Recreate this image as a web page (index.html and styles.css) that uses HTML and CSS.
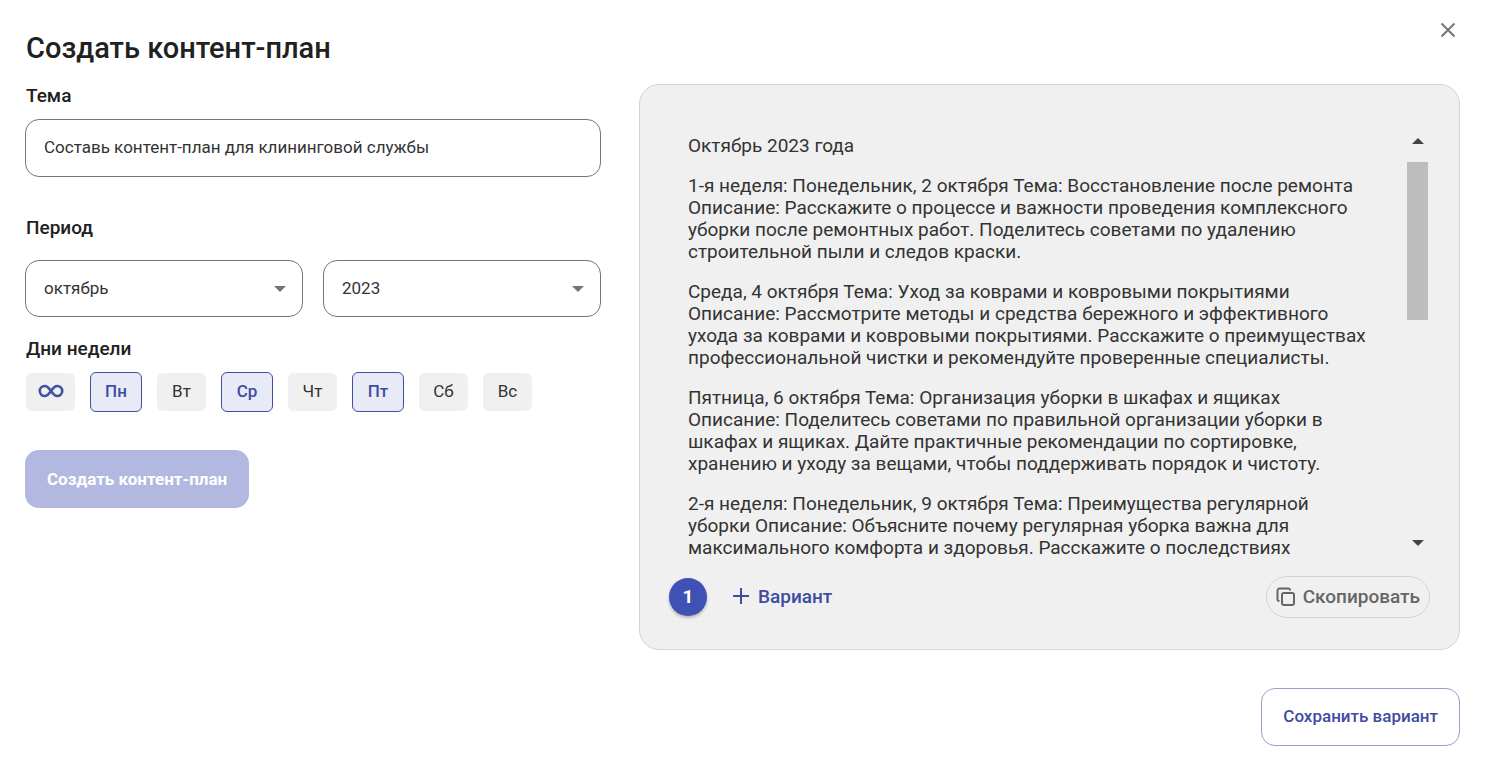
FILE: index.html
```html
<!DOCTYPE html>
<html lang="ru">
<head>
<meta charset="utf-8">
<meta name="viewport" content="width=device-width, initial-scale=1">
<title>Создать контент-план</title>
<link rel="stylesheet" href="styles.css">
</head>
<body>
<main class="dialog">
  <header class="dialog-header">
    <h1 class="title">Создать контент-план</h1>
    <button class="close" type="button" aria-label="Закрыть">
      <svg width="16" height="16" viewBox="0 0 16 16"><path d="M1.5 1.5l13 13M14.5 1.5l-13 13" fill="none" stroke="currentColor" stroke-width="2"/></svg>
    </button>
  </header>
  <div class="columns">
    <form class="form">
      <label class="label" for="topic">Тема</label>
      <input class="field" id="topic" type="text" value="Составь контент-план для клининговой службы">
      <label class="label label-period" for="month">Период</label>
      <div class="period">
        <div class="select-box">
          <select class="field" id="month"><option>октябрь</option></select>
          <svg class="caret" width="12" height="6" viewBox="0 0 12 6"><path d="M0 0h12L6 6z" fill="currentColor"/></svg>
        </div>
        <div class="select-box">
          <select class="field" aria-label="Год"><option>2023</option></select>
          <svg class="caret" width="12" height="6" viewBox="0 0 12 6"><path d="M0 0h12L6 6z" fill="currentColor"/></svg>
        </div>
      </div>
      <h2 class="label label-days">Дни недели</h2>
      <div class="days">
        <button class="day day-all" type="button" aria-label="Все дни">
          <svg width="26" height="14" viewBox="0 0 26 14"><path d="M13 7C11 4.200 9.500 2 6.800 2a5 5 0 0 0 0 10C9.500 12 11 9.800 13 7s3.500-5 6.200-5a5 5 0 0 1 0 10C16.500 12 15 9.800 13 7z" fill="none" stroke="currentColor" stroke-width="2.600"/></svg>
        </button>
        <button class="day day-on" type="button" aria-pressed="true">Пн</button>
        <button class="day" type="button">Вт</button>
        <button class="day day-on" type="button" aria-pressed="true">Ср</button>
        <button class="day" type="button">Чт</button>
        <button class="day day-on" type="button" aria-pressed="true">Пт</button>
        <button class="day" type="button">Сб</button>
        <button class="day" type="button">Вс</button>
      </div>
      <button class="submit" type="button" disabled>Создать контент-план</button>
    </form>
    <div class="result">
      <section class="panel">
        <div class="viewer">
          <div class="plan">
            <p>Октябрь 2023 года</p>
            <p>1-я неделя: Понедельник, 2 октября Тема: Восстановление после ремонта<br>Описание: Расскажите о процессе и важности проведения комплексного<br>уборки после ремонтных работ. Поделитесь советами по удалению<br>строительной пыли и следов краски.</p>
            <p>Среда, 4 октября Тема: Уход за коврами и ковровыми покрытиями<br>Описание: Рассмотрите методы и средства бережного и эффективного<br>ухода за коврами и ковровыми покрытиями. Расскажите о преимуществах<br>профессиональной чистки и рекомендуйте проверенные специалисты.</p>
            <p>Пятница, 6 октября Тема: Организация уборки в шкафах и ящиках<br>Описание: Поделитесь советами по правильной организации уборки в<br>шкафах и ящиках. Дайте практичные рекомендации по сортировке,<br>хранению и уходу за вещами, чтобы поддерживать порядок и чистоту.</p>
            <p>2-я неделя: Понедельник, 9 октября Тема: Преимущества регулярной<br>уборки Описание: Объясните почему регулярная уборка важна для<br>максимального комфорта и здоровья. Расскажите о последствиях</p>
          </div>
          <div class="scrollbar" aria-hidden="true">
            <svg width="12" height="6" viewBox="0 0 12 6"><path d="M0 6h12L6 0z" fill="currentColor"/></svg>
            <div class="track"><div class="thumb"></div></div>
            <svg width="12" height="6" viewBox="0 0 12 6"><path d="M0 0h12L6 6z" fill="currentColor"/></svg>
          </div>
        </div>
        <div class="toolbar">
          <button class="variant" type="button">1</button>
          <button class="add" type="button">
            <svg width="16" height="16" viewBox="0 0 16 16"><path d="M8 0v16M0 8h16" stroke="currentColor" stroke-width="2"/></svg>
            Вариант
          </button>
          <button class="copy" type="button">
            <svg width="20" height="20" viewBox="0 0 20 20" fill="none" stroke="currentColor" stroke-width="2"><rect x="6" y="6" width="12" height="12" rx="2"/><path d="M3.500 14H3a1.500 1.500 0 0 1-1.500-1.500v-9A2 2 0 0 1 3.500 1.500h9A1.500 1.500 0 0 1 14 3v.500"/></svg>
            Скопировать
          </button>
        </div>
      </section>
      <button class="save" type="button">Сохранить вариант</button>
    </div>
  </div>
</main>
</body>
</html>
```
FILE: styles.css
```css
* {
  box-sizing: border-box;
}

body {
  margin: 0;
  background: #fff;
  color: #212121;
  font-family: Roboto, "Liberation Sans", sans-serif;
}

button,
input,
select {
  margin: 0;
  font-family: inherit;
}

svg {
  display: block;
  flex: none;
}

.dialog {
  padding: 16px 25px 15px;
}

.dialog-header {
  display: flex;
  justify-content: space-between;
  align-items: flex-start;
  height: 68px;
}

.title {
  margin: 0;
  padding: 14px 0 0 1px;
  font-size: 29px;
  line-height: 36px;
  font-weight: 500;
}

.close {
  display: grid;
  place-items: center;
  width: 24px;
  height: 28px;
  padding: 0;
  border: 0;
  background: none;
  color: #757575;
}

.columns {
  display: grid;
  grid-template-columns: 576fr 821fr;
  gap: 38px;
}

.form {
  display: flex;
  flex-direction: column;
  align-items: stretch;
}

.label {
  margin: 0;
  padding-left: 1px;
  font-size: 19px;
  line-height: 24px;
  font-weight: 500;
}

.label-period {
  margin-top: 39px;
}

.label-days {
  margin-top: 20px;
}

.field {
  width: 100%;
  height: 58px;
  padding: 0 18px 2px;
  border: 1px solid #757575;
  border-radius: 14px;
  background: #fff;
  color: #333;
  font-size: 17px;
  appearance: none;
}

#topic {
  margin-top: 11px;
}

.period {
  display: grid;
  grid-template-columns: 1fr 1fr;
  gap: 20px;
  margin-top: 20px;
}

.select-box {
  position: relative;
}

.select-box .field {
  height: 57px;
}

.caret {
  position: absolute;
  right: 17px;
  top: 26px;
  color: #757575;
  pointer-events: none;
}

.days {
  display: flex;
  align-items: center;
  gap: 15px;
  margin-top: 11px;
  padding-left: 1px;
}

.day {
  display: grid;
  place-items: center;
  width: 49px;
  height: 38px;
  padding: 0 0 2px;
  border: 0;
  border-radius: 6px;
  background: #f0f0f0;
  color: #333;
  font-size: 17px;
}

.day-all {
  color: #3f51a5;
}

.day-on {
  width: 52px;
  height: 40px;
  border: 1px solid #3f51a0;
  background: #e8eaf6;
  color: #3f4ba5;
  font-weight: 500;
}

.submit {
  align-self: flex-start;
  height: 58px;
  margin-top: 38px;
  padding: 0 22px;
  border: 0;
  border-radius: 14px;
  background: #b2b8e0;
  color: #fff;
  font-size: 17px;
  font-weight: 700;
}

.result {
  display: flex;
  flex-direction: column;
}

.panel {
  padding: 49px 29px 31px;
  border: 1px solid #d4d4d4;
  border-radius: 20px;
  background: #f0f0f0;
}

.viewer {
  display: flex;
  justify-content: space-between;
  height: 428px;
  padding-left: 19px;
}

.plan {
  padding-top: 1px;
  overflow: hidden;
  color: #333;
  font-size: 19px;
  line-height: 22px;
  white-space: nowrap;
}

.plan p {
  margin: 0 0 18px;
}

.plan p:last-child {
  margin-bottom: 0;
}

.scrollbar {
  display: flex;
  flex-direction: column;
  align-items: center;
  width: 21px;
  margin-right: 2px;
  padding: 4px 0 16px;
  color: #444;
}

.track {
  flex: 1;
  width: 100%;
  padding: 18px 0;
}

.thumb {
  height: 44%;
  background: #bdbdbd;
}

.toolbar {
  display: flex;
  align-items: center;
  margin-top: 14px;
}

.variant {
  width: 38px;
  height: 38px;
  padding: 0 0 1px;
  border: 0;
  border-radius: 50%;
  background: #3f51b5;
  box-shadow: 0 2px 3px rgba(0, 0, 0, 0.25);
  color: #fff;
  font-size: 19px;
  font-weight: 700;
}

.add,
.copy {
  display: flex;
  align-items: center;
  border: 0;
  background: none;
  font-size: 19px;
  font-weight: 500;
}

.add {
  gap: 9px;
  margin-left: 26px;
  padding: 0 0 2px;
  color: #3f4ba0;
}

.copy {
  gap: 7px;
  height: 42px;
  margin-left: auto;
  padding: 0 9px 1px;
  border: 1px solid #d4d4d4;
  border-radius: 21px;
  color: #666;
}

.save {
  align-self: flex-end;
  height: 58px;
  margin-top: 38px;
  padding: 0 21px 2px;
  border: 1px solid #9aa0c8;
  border-radius: 14px;
  background: #fff;
  color: #3f4ba0;
  font-size: 17px;
  font-weight: 500;
}
```
